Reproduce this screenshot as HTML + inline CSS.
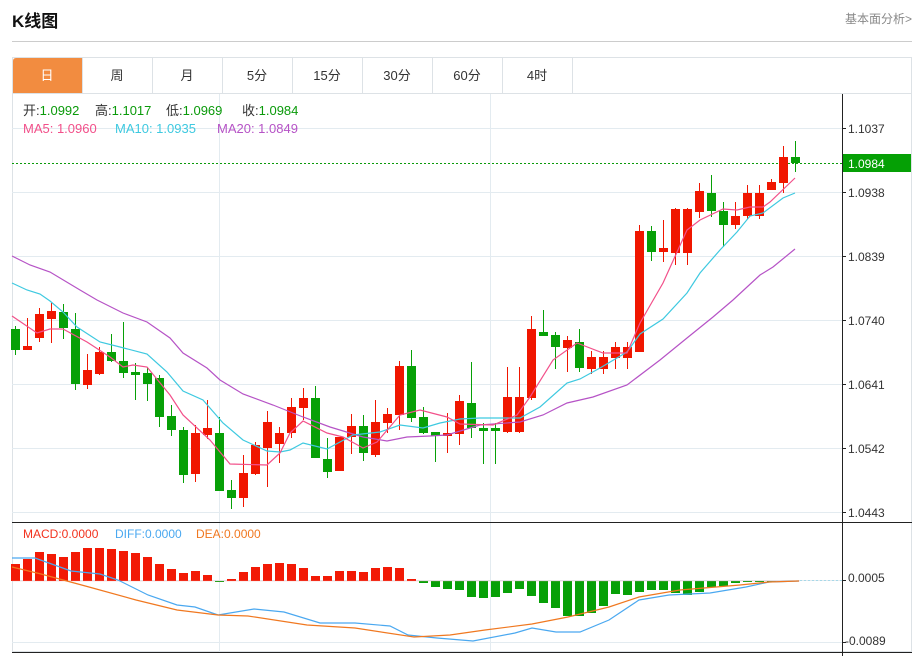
<!DOCTYPE html>
<html><head><meta charset="utf-8"><style>
body{margin:0;background:#fff;width:924px;height:656px;overflow:hidden;font-family:"Liberation Sans","Noto Sans CJK SC",sans-serif;}
svg{position:absolute;left:0;top:0}
</style></head><body>
<svg width="924" height="656" viewBox="0 0 924 656" font-family="Liberation Sans, Noto Sans CJK SC, sans-serif">
<text x="12" y="27" font-size="17" font-weight="bold" fill="#111">K线图</text>
<text x="912" y="23" font-size="12" fill="#888" text-anchor="end">基本面分析&gt;</text>
<line x1="12" y1="41.5" x2="912" y2="41.5" stroke="#ccc"/>
<rect x="12.5" y="57.5" width="899" height="594" fill="none" stroke="#dde2e6"/>
<line x1="12" y1="93.5" x2="912" y2="93.5" stroke="#dde2e6"/>
<path d="M13 93 V61 Q13 58 16 58 H82 V93 Z" fill="#f28c40"/>
<g stroke="#dde2e6"><line x1="82.5" y1="58" x2="82.5" y2="93"/><line x1="152.5" y1="58" x2="152.5" y2="93"/><line x1="222.5" y1="58" x2="222.5" y2="93"/><line x1="292.5" y1="58" x2="292.5" y2="93"/><line x1="362.5" y1="58" x2="362.5" y2="93"/><line x1="432.5" y1="58" x2="432.5" y2="93"/><line x1="502.5" y1="58" x2="502.5" y2="93"/><line x1="572.5" y1="58" x2="572.5" y2="93"/></g>
<g font-size="13" text-anchor="middle" fill="#333"><text x="47" y="80" fill="#fff">日</text><text x="117" y="80">周</text><text x="187" y="80">月</text><text x="257" y="80">5分</text><text x="327" y="80">15分</text><text x="397" y="80">30分</text><text x="467" y="80">60分</text><text x="537" y="80">4时</text></g>
<g stroke="#e3ebf0"><line x1="12" y1="128.5" x2="842" y2="128.5"/><line x1="12" y1="192.5" x2="842" y2="192.5"/><line x1="12" y1="256.5" x2="842" y2="256.5"/><line x1="12" y1="320.5" x2="842" y2="320.5"/><line x1="12" y1="384.5" x2="842" y2="384.5"/><line x1="12" y1="448.5" x2="842" y2="448.5"/><line x1="12" y1="512.5" x2="842" y2="512.5"/><line x1="219.5" y1="94" x2="219.5" y2="652"/><line x1="490.5" y1="94" x2="490.5" y2="652"/><line x1="12" y1="580.5" x2="842" y2="580.5"/><line x1="12" y1="642.5" x2="842" y2="642.5"/></g>
<line x1="842.5" y1="94" x2="842.5" y2="656" stroke="#222"/>
<line x1="12" y1="522.5" x2="912" y2="522.5" stroke="#222"/>
<line x1="12" y1="652.5" x2="912" y2="652.5" stroke="#222"/>
<g stroke="#222"><line x1="842" y1="128.5" x2="846" y2="128.5"/><line x1="842" y1="192.5" x2="846" y2="192.5"/><line x1="842" y1="256.5" x2="846" y2="256.5"/><line x1="842" y1="320.5" x2="846" y2="320.5"/><line x1="842" y1="384.5" x2="846" y2="384.5"/><line x1="842" y1="448.5" x2="846" y2="448.5"/><line x1="842" y1="512.5" x2="846" y2="512.5"/><line x1="842" y1="580.5" x2="846" y2="580.5"/><line x1="842" y1="642.5" x2="846" y2="642.5"/></g>
<g font-size="12" fill="#333"><text x="848" y="133">1.1037</text><text x="848" y="197">1.0938</text><text x="848" y="261">1.0839</text><text x="848" y="325">1.0740</text><text x="848" y="389">1.0641</text><text x="848" y="453">1.0542</text><text x="848" y="517">1.0443</text><text x="848" y="582">0.0005</text><text x="845" y="645">-0.0089</text></g>
<rect x="843" y="154" width="68" height="18" fill="#05a005"/>
<text x="848" y="168" font-size="12" fill="#fff">1.0984</text>
<line x1="12" y1="163.5" x2="842" y2="163.5" stroke="#0a9a0a" stroke-dasharray="2,2"/>
<g stroke="#f01600" stroke-width="1"><line x1="27.5" y1="318" x2="27.5" y2="350"/><line x1="39.5" y1="308" x2="39.5" y2="342"/><line x1="51.5" y1="303" x2="51.5" y2="343"/><line x1="87.5" y1="354" x2="87.5" y2="389"/><line x1="99.5" y1="347" x2="99.5" y2="375"/><line x1="195.5" y1="425" x2="195.5" y2="482"/><line x1="207.5" y1="400" x2="207.5" y2="439"/><line x1="243.5" y1="455" x2="243.5" y2="507"/><line x1="255.5" y1="442" x2="255.5" y2="475"/><line x1="267.5" y1="411" x2="267.5" y2="487"/><line x1="279.5" y1="427" x2="279.5" y2="463"/><line x1="291.5" y1="398" x2="291.5" y2="438"/><line x1="303.5" y1="388" x2="303.5" y2="420"/><line x1="339.5" y1="437" x2="339.5" y2="471"/><line x1="351.5" y1="414" x2="351.5" y2="454"/><line x1="375.5" y1="400" x2="375.5" y2="457"/><line x1="387.5" y1="408" x2="387.5" y2="433"/><line x1="399.5" y1="361" x2="399.5" y2="430"/><line x1="447.5" y1="413" x2="447.5" y2="453"/><line x1="459.5" y1="395" x2="459.5" y2="445"/><line x1="507.5" y1="367" x2="507.5" y2="433"/><line x1="519.5" y1="367" x2="519.5" y2="433"/><line x1="531.5" y1="316" x2="531.5" y2="400"/><line x1="567.5" y1="336" x2="567.5" y2="372"/><line x1="591.5" y1="351" x2="591.5" y2="374"/><line x1="603.5" y1="351" x2="603.5" y2="374"/><line x1="615.5" y1="342" x2="615.5" y2="369"/><line x1="627.5" y1="342" x2="627.5" y2="369"/><line x1="639.5" y1="225" x2="639.5" y2="352"/><line x1="663.5" y1="220" x2="663.5" y2="262"/><line x1="675.5" y1="208" x2="675.5" y2="265"/><line x1="687.5" y1="208" x2="687.5" y2="265"/><line x1="699.5" y1="183" x2="699.5" y2="218"/><line x1="735.5" y1="202" x2="735.5" y2="229"/><line x1="747.5" y1="185" x2="747.5" y2="219"/><line x1="759.5" y1="185" x2="759.5" y2="219"/><line x1="771.5" y1="179" x2="771.5" y2="190"/><line x1="783.5" y1="146" x2="783.5" y2="193"/></g>
<g fill="#f01600"><rect x="23" y="346" width="9" height="4"/><rect x="35" y="314" width="9" height="24"/><rect x="47" y="311" width="9" height="8"/><rect x="83" y="370" width="9" height="15"/><rect x="95" y="352" width="9" height="22"/><rect x="191" y="433" width="9" height="41"/><rect x="203" y="428" width="9" height="7"/><rect x="239" y="473" width="9" height="25"/><rect x="251" y="445" width="9" height="29"/><rect x="263" y="422" width="9" height="26"/><rect x="275" y="433" width="9" height="11"/><rect x="287" y="407" width="9" height="26"/><rect x="299" y="398" width="9" height="10"/><rect x="335" y="437" width="9" height="34"/><rect x="347" y="426" width="9" height="11"/><rect x="371" y="422" width="9" height="33"/><rect x="383" y="414" width="9" height="9"/><rect x="395" y="366" width="9" height="49"/><rect x="443" y="433" width="9" height="3"/><rect x="455" y="401" width="9" height="33"/><rect x="503" y="397" width="9" height="35"/><rect x="515" y="397" width="9" height="35"/><rect x="527" y="329" width="9" height="69"/><rect x="563" y="340" width="9" height="8"/><rect x="587" y="357" width="9" height="12"/><rect x="599" y="357" width="9" height="12"/><rect x="611" y="347" width="9" height="11"/><rect x="623" y="347" width="9" height="11"/><rect x="635" y="231" width="9" height="121"/><rect x="659" y="248" width="9" height="4"/><rect x="671" y="209" width="9" height="44"/><rect x="683" y="209" width="9" height="44"/><rect x="695" y="191" width="9" height="21"/><rect x="731" y="216" width="9" height="9"/><rect x="743" y="193" width="9" height="23"/><rect x="755" y="193" width="9" height="23"/><rect x="767" y="182" width="9" height="8"/><rect x="779" y="157" width="9" height="26"/></g>
<g stroke="#07a007"><line x1="15.5" y1="326" x2="15.5" y2="355"/><line x1="63.5" y1="304" x2="63.5" y2="339"/><line x1="75.5" y1="313" x2="75.5" y2="390"/><line x1="111.5" y1="334" x2="111.5" y2="362"/><line x1="123.5" y1="322" x2="123.5" y2="378"/><line x1="135.5" y1="363" x2="135.5" y2="400"/><line x1="147.5" y1="367" x2="147.5" y2="401"/><line x1="159.5" y1="375" x2="159.5" y2="427"/><line x1="171.5" y1="405" x2="171.5" y2="436"/><line x1="183.5" y1="427" x2="183.5" y2="483"/><line x1="219.5" y1="417" x2="219.5" y2="491"/><line x1="231.5" y1="480" x2="231.5" y2="509"/><line x1="315.5" y1="386" x2="315.5" y2="458"/><line x1="327.5" y1="438" x2="327.5" y2="478"/><line x1="363.5" y1="415" x2="363.5" y2="461"/><line x1="411.5" y1="350" x2="411.5" y2="422"/><line x1="423.5" y1="407" x2="423.5" y2="434"/><line x1="435.5" y1="432" x2="435.5" y2="462"/><line x1="471.5" y1="362" x2="471.5" y2="438"/><line x1="483.5" y1="423" x2="483.5" y2="464"/><line x1="495.5" y1="423" x2="495.5" y2="464"/><line x1="543.5" y1="310" x2="543.5" y2="336"/><line x1="555.5" y1="332" x2="555.5" y2="369"/><line x1="579.5" y1="329" x2="579.5" y2="372"/><line x1="651.5" y1="226" x2="651.5" y2="261"/><line x1="711.5" y1="175" x2="711.5" y2="217"/><line x1="723.5" y1="202" x2="723.5" y2="247"/><line x1="795.5" y1="141" x2="795.5" y2="172"/></g>
<g fill="#07a007"><rect x="11" y="329" width="9" height="21"/><rect x="59" y="312" width="9" height="16"/><rect x="71" y="329" width="9" height="55"/><rect x="107" y="352" width="9" height="9"/><rect x="119" y="361" width="9" height="12"/><rect x="131" y="372" width="9" height="3"/><rect x="143" y="373" width="9" height="11"/><rect x="155" y="378" width="9" height="39"/><rect x="167" y="416" width="9" height="14"/><rect x="179" y="430" width="9" height="45"/><rect x="215" y="433" width="9" height="58"/><rect x="227" y="490" width="9" height="8"/><rect x="311" y="398" width="9" height="60"/><rect x="323" y="459" width="9" height="13"/><rect x="359" y="426" width="9" height="27"/><rect x="407" y="366" width="9" height="52"/><rect x="419" y="417" width="9" height="16"/><rect x="431" y="432" width="9" height="4"/><rect x="467" y="403" width="9" height="25"/><rect x="479" y="428" width="9" height="3"/><rect x="491" y="428" width="9" height="3"/><rect x="539" y="332" width="9" height="4"/><rect x="551" y="335" width="9" height="12"/><rect x="575" y="342" width="9" height="26"/><rect x="647" y="231" width="9" height="21"/><rect x="707" y="193" width="9" height="18"/><rect x="719" y="211" width="9" height="14"/><rect x="791" y="157" width="9" height="6"/></g>
<g fill="none" stroke-width="1.2">
<polyline stroke="#b653c6" points="12,256 30,265 50,272 80,290 97,300 123,313 147,322 170,338 183,353 207,368 220,380 243,394 273,405 303,417 330,427 363,437 387,441 407,437 430,436 447,435 480,425 520,422 543,415 567,403 593,397 627,385 660,360 687,338 713,317 733,300 760,275 773,267 795,249"/>
<polyline stroke="#3ec9e0" points="12,283 27,290 40,294 50,301 63,312 77,327 100,342 120,347 147,354 167,372 183,391 203,400 223,423 243,440 267,451 280,452 290,450 303,443 327,449 353,435 380,432 400,425 423,428 440,423 460,419 480,418 500,418 520,418 540,407 567,383 580,379 600,368 627,352 640,334 663,319 687,293 700,273 720,250 737,232 750,216 763,213 783,198 795,193"/>
<polyline stroke="#f2508a" points="12,316 37,333 50,329 63,329 87,342 110,357 123,367 133,365 147,367 170,395 183,415 210,440 230,464 267,465 280,453 290,433 303,421 327,433 343,437 363,448 377,442 400,415 420,410 447,417 460,424 493,425 517,415 530,397 553,360 577,343 603,353 627,353 640,323 663,283 687,230 700,220 723,209 737,210 750,207 763,207 770,202 795,178"/>
</g>
<g font-size="13"><text x="23" y="115" fill="#333">开:<tspan fill="#0a9a0a">1.0992</tspan></text><text x="95" y="115" fill="#333">高:<tspan fill="#0a9a0a">1.1017</tspan></text><text x="166" y="115" fill="#333">低:<tspan fill="#0a9a0a">1.0969</tspan></text><text x="242" y="115" fill="#333">收:<tspan fill="#0a9a0a">1.0984</tspan></text>
<text x="23" y="133" fill="#f2508a">MA5: 1.0960</text><text x="115" y="133" fill="#3ec9e0">MA10: 1.0935</text><text x="217" y="133" fill="#b653c6">MA20: 1.0849</text></g>
<g font-size="12"><text x="23" y="538" fill="#f2321e">MACD:0.0000</text><text x="115" y="538" fill="#4aa8f0">DIFF:0.0000</text><text x="196" y="538" fill="#f07820">DEA:0.0000</text></g>
<g fill="#f21a05"><rect x="11" y="564" width="9" height="17"/><rect x="23" y="559" width="9" height="22"/><rect x="35" y="552" width="9" height="29"/><rect x="47" y="554" width="9" height="27"/><rect x="59" y="557" width="9" height="24"/><rect x="71" y="552" width="9" height="29"/><rect x="83" y="548" width="9" height="33"/><rect x="95" y="548" width="9" height="33"/><rect x="107" y="549" width="9" height="32"/><rect x="119" y="551" width="9" height="30"/><rect x="131" y="553" width="9" height="28"/><rect x="143" y="557" width="9" height="24"/><rect x="155" y="564" width="9" height="17"/><rect x="167" y="569" width="9" height="12"/><rect x="179" y="573" width="9" height="8"/><rect x="191" y="571" width="9" height="10"/><rect x="203" y="575" width="9" height="6"/><rect x="227" y="579" width="9" height="2"/><rect x="239" y="572" width="9" height="9"/><rect x="251" y="567" width="9" height="14"/><rect x="263" y="564" width="9" height="17"/><rect x="275" y="563" width="9" height="18"/><rect x="287" y="564" width="9" height="17"/><rect x="299" y="568" width="9" height="13"/><rect x="311" y="576" width="9" height="5"/><rect x="323" y="576" width="9" height="5"/><rect x="335" y="571" width="9" height="10"/><rect x="347" y="571" width="9" height="10"/><rect x="359" y="572" width="9" height="9"/><rect x="371" y="568" width="9" height="13"/><rect x="383" y="567" width="9" height="14"/><rect x="395" y="568" width="9" height="13"/><rect x="407" y="579" width="9" height="2"/></g>
<g fill="#07a007"><rect x="215" y="581" width="9" height="1"/><rect x="419" y="581" width="9" height="2"/><rect x="431" y="581" width="9" height="6"/><rect x="443" y="581" width="9" height="8"/><rect x="455" y="581" width="9" height="9"/><rect x="467" y="581" width="9" height="16"/><rect x="479" y="581" width="9" height="17"/><rect x="491" y="581" width="9" height="16"/><rect x="503" y="581" width="9" height="12"/><rect x="515" y="581" width="9" height="8"/><rect x="527" y="581" width="9" height="15"/><rect x="539" y="581" width="9" height="22"/><rect x="551" y="581" width="9" height="27"/><rect x="563" y="581" width="9" height="35"/><rect x="575" y="581" width="9" height="35"/><rect x="587" y="581" width="9" height="32"/><rect x="599" y="581" width="9" height="25"/><rect x="611" y="581" width="9" height="13"/><rect x="623" y="581" width="9" height="14"/><rect x="635" y="581" width="9" height="11"/><rect x="647" y="581" width="9" height="9"/><rect x="659" y="581" width="9" height="9"/><rect x="671" y="581" width="9" height="12"/><rect x="683" y="581" width="9" height="14"/><rect x="695" y="581" width="9" height="11"/><rect x="707" y="581" width="9" height="6"/><rect x="719" y="581" width="9" height="5"/><rect x="731" y="581" width="9" height="2"/><rect x="743" y="581" width="9" height="1"/><rect x="755" y="581" width="9" height="1"/><rect x="767" y="581" width="9" height="1"/></g>
<line x1="12" y1="581" x2="800" y2="581" stroke="#f0a0a0" stroke-width="0.6" opacity="0.6"/>
<line x1="800" y1="580.5" x2="842" y2="580.5" stroke="#a8d8e8" stroke-dasharray="2,2"/>
<g fill="none" stroke-width="1.2">
<polyline stroke="#4aa8f0" points="12,558 35,558 71,571 100,574 118,580 148,595 177,605 195,607 218,615 254,609 284,612 320,623 355,623 390,626 408,635 437,638 473,641 515,633 532,628 556,632 580,632 609,620 639,600 669,595 710,593 746,587 769,582 799,581"/>
<polyline stroke="#f07820" points="12,567 41,574 89,587 136,600 177,610 218,615 248,616 307,625 355,628 414,637 450,635 485,630 532,624 568,617 609,607 639,597 680,590 740,585 769,582 799,581"/>
</g>
</svg>
</body></html>
